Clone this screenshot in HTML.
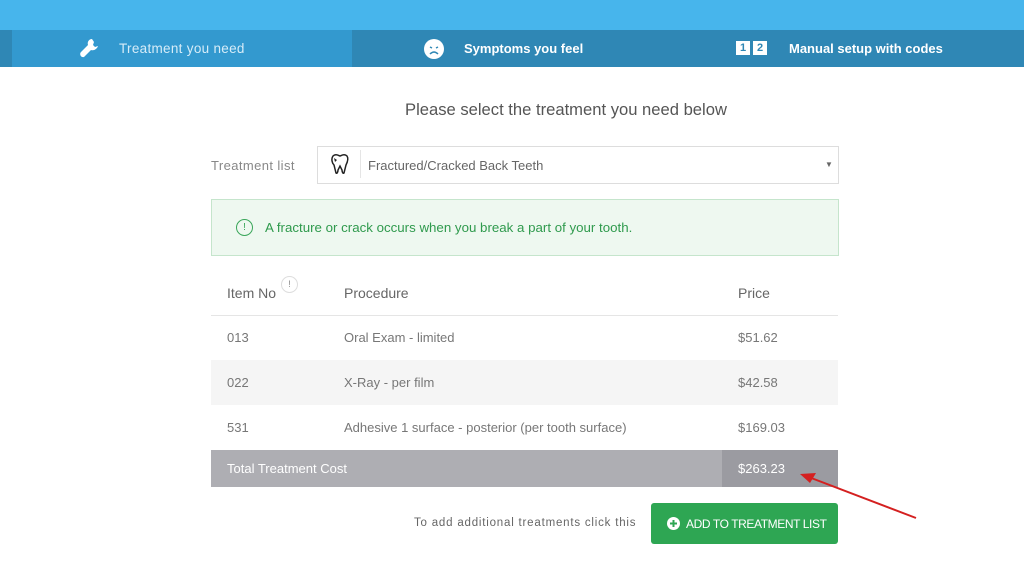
<!DOCTYPE html>
<html><head><meta charset="utf-8"><style>
body{margin:0;width:1024px;height:562px;background:#fff;font-family:"Liberation Sans",sans-serif;position:relative;overflow:hidden}
.top{position:absolute;left:0;top:0;width:1024px;height:30px;background:#47b5ec}
.tabs{position:absolute;left:0;top:30px;width:1024px;height:37px;background:#2f87b5}
.tab1{position:absolute;left:12px;top:0;width:340px;height:37px;background:#3399cf}
.t{position:absolute;top:11px;font-size:13px;color:#fff}
.abs{position:absolute}
.row{position:absolute;left:211px;width:627px;height:45px;font-size:13px;color:#777}
.row span{position:absolute;top:15px}
</style></head><body>
<div class="top"></div>
<div class="tabs">
<div class="tab1"></div>
<svg class="abs" style="left:78px;top:8px" width="22" height="22" viewBox="0 0 22 22"><path d="M14 1c-3 0-5 3-4 6L3 14c-2 2 0 6 3 5l7-7c3 1 6-1 7-4l-3 1-2-2 1-3z" fill="#fff"/></svg>
<div class="t" style="left:119px;color:#d6ecf8;font-size:13.5px;letter-spacing:0.3px">Treatment you need</div>
<svg class="abs" style="left:423px;top:8px" width="22" height="22"><circle cx="11" cy="11" r="10" fill="#fff"/><path d="M7 9l2 1M15 9l-2 1M7 16q4-4 8 0" stroke="#2f87b5" stroke-width="1.5" fill="none"/></svg>
<div class="t" style="left:464px;font-weight:bold">Symptoms you feel</div>
<div class="abs" style="left:736px;top:11px;width:14px;height:14px;background:#fff;color:#2f87b5;font-size:11px;font-weight:bold;text-align:center;line-height:14px">1</div>
<div class="abs" style="left:753px;top:11px;width:14px;height:14px;background:#fff;color:#2f87b5;font-size:11px;font-weight:bold;text-align:center;line-height:14px">2</div>
<div class="t" style="left:789px;font-weight:bold">Manual setup with codes</div>
</div>
<div class="abs" style="left:405px;top:100px;font-size:16.6px;color:#555">Please select the treatment you need below</div>
<div class="abs" style="left:211px;top:158px;font-size:13px;color:#888;letter-spacing:0.4px">Treatment list</div>
<div class="abs" style="left:317px;top:146px;width:520px;height:36px;border:1px solid #ddd"></div>
<svg class="abs" style="left:328px;top:152px" width="24" height="24" viewBox="0 0 24 24"><path d="M5 4c3-3 6 0 7 0s4-3 7 0c2 3 0 7-1 9l-2 8c-1 1-2-1-2-3l-2-4-2 4c0 2-1 4-2 3l-2-8C4 11 3 7 5 4z" fill="none" stroke="#222" stroke-width="1.5"/><path d="M6 6l3 2-2 2z" fill="#222"/></svg>
<div class="abs" style="left:360px;top:150px;width:1px;height:28px;background:#e5e5e5"></div>
<div class="abs" style="left:368px;top:158px;font-size:13px;color:#666">Fractured/Cracked Back Teeth</div>
<div class="abs" style="left:825px;top:160px;font-size:8px;color:#666">▼</div>
<div class="abs" style="left:211px;top:199px;width:626px;height:55px;background:#eef8f0;border:1px solid #c5e5cc"></div>
<div class="abs" style="left:236px;top:219px;width:15px;height:15px;border:1px solid #3aa65a;border-radius:50%;color:#3aa65a;font-size:10px;text-align:center;line-height:15px">!</div>
<div class="abs" style="left:265px;top:220px;font-size:13.3px;color:#2f9a4d">A fracture or crack occurs when you break a part of your tooth.</div>
<div class="row" style="top:270px;border-bottom:1px solid #e5e5e5;color:#666;font-size:14px"><span style="left:16px;top:15px">Item No</span><span style="left:133px;top:15px">Procedure</span><span style="left:527px">Price</span></div>
<div class="abs" style="left:281px;top:276px;width:15px;height:15px;border:1px solid #ddd;border-radius:50%;font-size:9px;color:#888;text-align:center;line-height:15px">!</div>
<div class="row" style="top:315px"><span style="left:16px">013</span><span style="left:133px">Oral Exam - limited</span><span style="left:527px">$51.62</span></div>
<div class="row" style="top:360px;background:#f5f5f5"><span style="left:16px">022</span><span style="left:133px">X-Ray - per film</span><span style="left:527px">$42.58</span></div>
<div class="row" style="top:405px"><span style="left:16px">531</span><span style="left:133px">Adhesive 1 surface - posterior (per tooth surface)</span><span style="left:527px">$169.03</span></div>
<div class="abs" style="left:211px;top:450px;width:627px;height:37px;background:#aeaeb3"></div>
<div class="abs" style="left:722px;top:450px;width:116px;height:37px;background:#9b9ba1"></div>
<div class="abs" style="left:227px;top:461px;font-size:13px;color:#fff">Total Treatment Cost</div>
<div class="abs" style="left:738px;top:461px;font-size:13px;color:#fff">$263.23</div>
<div class="abs" style="left:414px;top:517px;font-size:11.5px;color:#666;letter-spacing:0.8px">To add additional treatments click this</div>
<div class="abs" style="left:651px;top:503px;width:187px;height:41px;background:#2ea653;border-radius:3px"></div>
<svg class="abs" style="left:667px;top:517px" width="13" height="13"><circle cx="6.5" cy="6.5" r="6.5" fill="#fff"/><path d="M6.5 3v7M3 6.5h7" stroke="#2ea653" stroke-width="2"/></svg>
<div class="abs" style="left:686px;top:517px;font-size:12px;color:#fff;letter-spacing:-0.4px">ADD TO TREATMENT LIST</div>
<svg class="abs" style="left:790px;top:465px" width="135" height="60"><line x1="126" y1="53" x2="16" y2="11" stroke="#d42020" stroke-width="2"/><path d="M10 9l16-1-6 10z" fill="#d42020"/></svg>
</body></html>
